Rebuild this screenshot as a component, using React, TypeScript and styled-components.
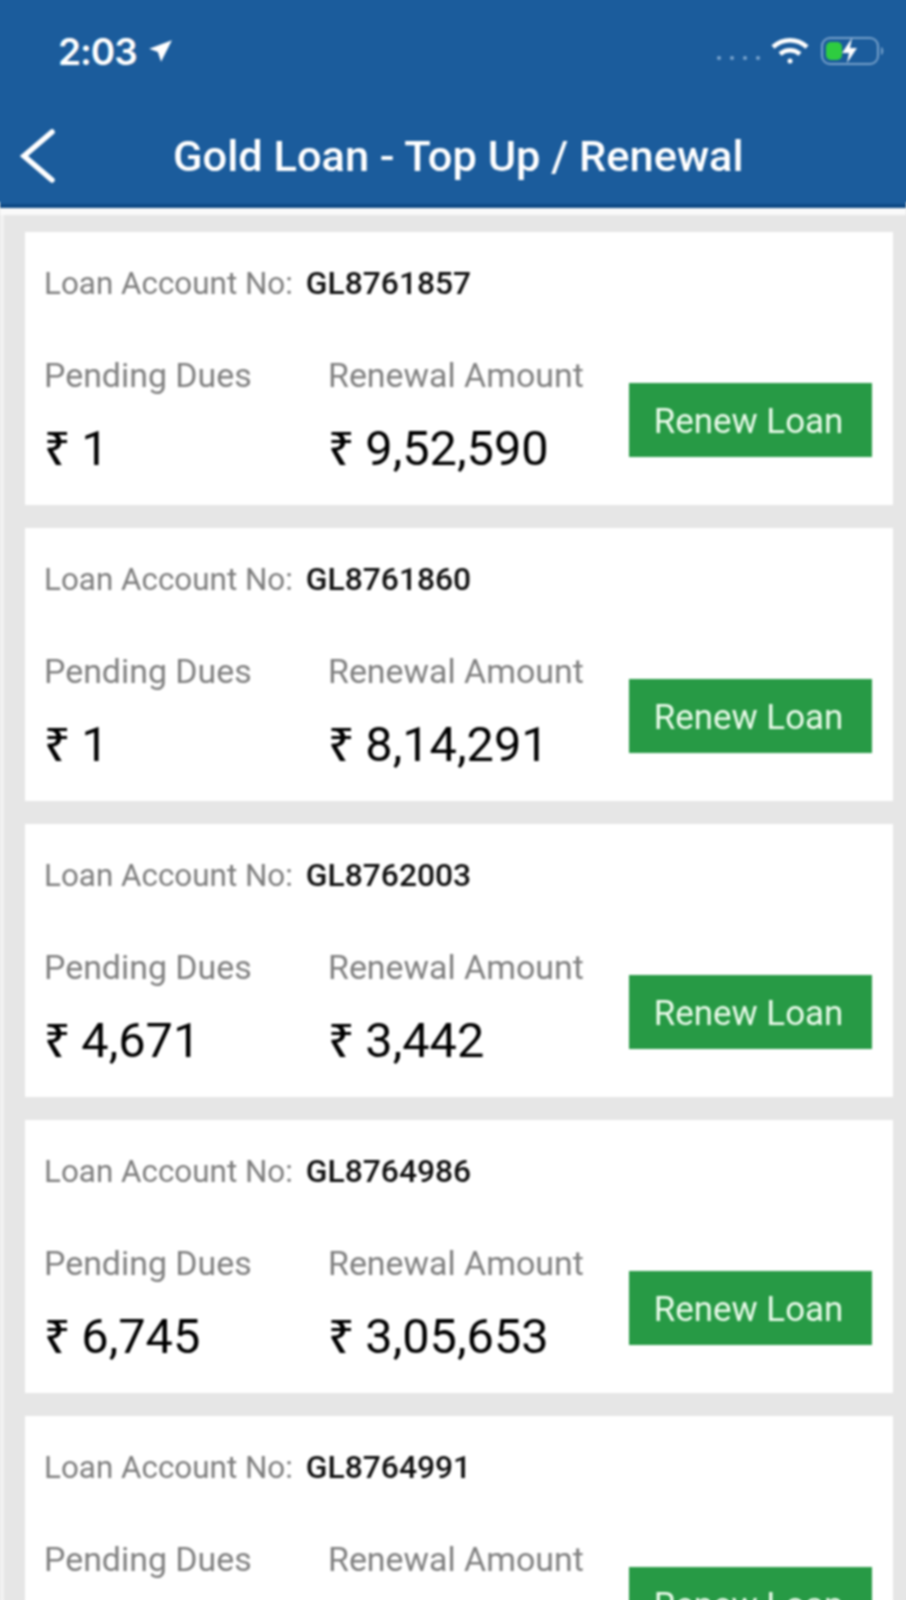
import React, { FC } from "react";
import styled, { createGlobalStyle } from "styled-components";

type Loan = {
  account: string;
  dues?: string;
  renewal?: string;
};

const loans: Loan[] = [
  { account: "GL8761857", dues: "1", renewal: "9,52,590" },
  { account: "GL8761860", dues: "1", renewal: "8,14,291" },
  { account: "GL8762003", dues: "4,671", renewal: "3,442" },
  { account: "GL8764986", dues: "6,745", renewal: "3,05,653" },
  { account: "GL8764991" }
];

const GlobalStyle = createGlobalStyle`
  html, body {
    margin: 0;
    padding: 0;
    height: 1600px;
    overflow: hidden;
    background: #e6e6e6;
  }
  body {
    font-family: Roboto, "Liberation Sans", sans-serif;
  }
`;

const Screen = styled.div`
  width: 906px;
  height: 1600px;
  display: flex;
  flex-direction: column;
  background: #e6e6e6;
  filter: blur(0.8px);
`;

const Header = styled.header`
  flex: none;
  height: 204px;
  background: #1b5c9c;
  border-bottom: 4px solid #0e4a86;
  box-shadow: -6px -6px 0 #1b5c9c, 6px -6px 0 #1b5c9c;
  display: flex;
  flex-direction: column;
`;

const StatusBar = styled.div`
  flex: none;
  height: 102px;
  padding: 0 20px 0 58px;
  display: flex;
  align-items: center;
  justify-content: space-between;
`;

const Time = styled.div`
  display: flex;
  align-items: center;
  gap: 10px;
  color: #fff;
  font-size: 37px;
  font-weight: 600;
  font-family: "Inter", Roboto, sans-serif;
  letter-spacing: -1px;
`;

const StatusIcons = styled.div`
  display: flex;
  align-items: center;
  gap: 11px;
`;

const SignalDots = styled.div`
  display: flex;
  gap: 9px;
  margin-top: 14px;
`;

const SignalDot = styled.span`
  width: 4px;
  height: 4px;
  border-radius: 50%;
  background: #7da6cf;
`;

const TitleBar = styled.div`
  flex: 1;
  display: flex;
  align-items: center;
  padding: 6px 0 0 19px;
`;

const BackButton = styled.button`
  all: unset;
  display: flex;
`;

const Title = styled.h1`
  margin: 0 0 0 116px;
  color: #fff;
  font-size: 43.4px;
  font-weight: 500;
  letter-spacing: 0;
`;

const HeaderGlow = styled.div`
  flex: none;
  height: 7px;
  background: #fafafa;
`;

const List = styled.main`
  display: flex;
  flex-direction: column;
  gap: 23px;
  padding: 17px 13px 0 21px;
  border-left: 4px solid #f2f2f2;
`;

const Card = styled.article`
  flex: none;
  height: 273px;
  box-sizing: border-box;
  background: #fff;
  padding: 29px 21px 0 19px;
`;

const AccountRow = styled.div`
  display: flex;
  align-items: center;
  gap: 13px;
  height: 44px;
`;

const AccountLabel = styled.span`
  color: #7e7e7e;
  font-size: 31.4px;
`;

const AccountNumber = styled.span`
  color: #111;
  font-size: 31.8px;
  font-weight: 500;
`;

const Details = styled.div`
  display: grid;
  grid-template-columns: 284px 301px 243px;
  margin-top: 51px;
`;

const Column = styled.div`
  display: flex;
  flex-direction: column;
`;

const DetailLabel = styled.span`
  color: #808080;
  font-size: 33.9px;
`;

const Amount = styled.div`
  color: #000;
  font-size: 48.7px;
  margin-top: 21px;
  display: flex;
  align-items: baseline;
  gap: 11px;
`;

const RupeeSign = styled.span`
  font-family: "Noto Sans", "DejaVu Sans", sans-serif;
  font-size: 46px;
  font-weight: 500;
`;

const RenewButton = styled.button`
  all: unset;
  box-sizing: border-box;
  width: 243px;
  height: 74px;
  margin-top: 27px;
  padding: 3px 4px 0 0;
  background: #279a45;
  color: #eafbea;
  font-size: 34.9px;
  font-weight: 400;
  text-align: center;
  line-height: 71px;
`;

const LocationArrow: FC = () => (
  <svg width="26" height="26" viewBox="0 0 24 24" fill="#fff">
    <path d="M23 2 2 10l8 3 3 9z" />
  </svg>
);

const Wifi: FC = () => (
  <svg width="38" height="30" viewBox="0 0 38 30" fill="none" stroke="#fff" strokeWidth="4.5">
    <path d="M2 11c10-9 24-9 34 0" />
    <path d="M9 18c6-5 14-5 20 0" />
    <circle cx="19" cy="25" r="2.5" fill="#fff" stroke="none" />
  </svg>
);

const Battery: FC = () => (
  <svg width="66" height="32" viewBox="0 0 66 32" fill="none">
    <rect x="2" y="3" width="56" height="26" rx="8" stroke="#76a0ca" strokeWidth="2" />
    <rect x="6" y="7" width="16" height="18" rx="5" fill="#2ecc40" />
    <path d="M32 3 22 18h7l-2 10 10-15h-7z" fill="#fff" />
    <path d="M61 12c3 1 3 7 0 8z" fill="#76a0ca" />
  </svg>
);

const BackChevron: FC = () => (
  <svg width="38" height="56" viewBox="0 0 38 56" fill="none" stroke="#fff" strokeWidth="5.5" strokeLinecap="round">
    <path d="M33 4 5 28l28 24" />
  </svg>
);

const Money: FC<{ value?: string }> = ({ value }) =>
  value ? (
    <Amount>
      <RupeeSign>₹</RupeeSign>
      {value}
    </Amount>
  ) : null;

const LoanCard: FC<{ loan: Loan }> = ({ loan }) => (
  <Card>
    <AccountRow>
      <AccountLabel>Loan Account No:</AccountLabel>
      <AccountNumber>{loan.account}</AccountNumber>
    </AccountRow>
    <Details>
      <Column>
        <DetailLabel>Pending Dues</DetailLabel>
        <Money value={loan.dues} />
      </Column>
      <Column>
        <DetailLabel>Renewal Amount</DetailLabel>
        <Money value={loan.renewal} />
      </Column>
      <RenewButton>Renew Loan</RenewButton>
    </Details>
  </Card>
);

const App: FC = () => (
  <>
    <GlobalStyle />
    <Screen>
      <Header>
        <StatusBar>
          <Time>
            2:03
            <LocationArrow />
          </Time>
          <StatusIcons>
            <SignalDots>
              <SignalDot />
              <SignalDot />
              <SignalDot />
              <SignalDot />
            </SignalDots>
            <Wifi />
            <Battery />
          </StatusIcons>
        </StatusBar>
        <TitleBar>
          <BackButton>
            <BackChevron />
          </BackButton>
          <Title>Gold Loan - Top Up / Renewal</Title>
        </TitleBar>
      </Header>
      <HeaderGlow />
      <List>
        {loans.map(loan => (
          <LoanCard key={loan.account} loan={loan} />
        ))}
      </List>
    </Screen>
  </>
);

export default App;
